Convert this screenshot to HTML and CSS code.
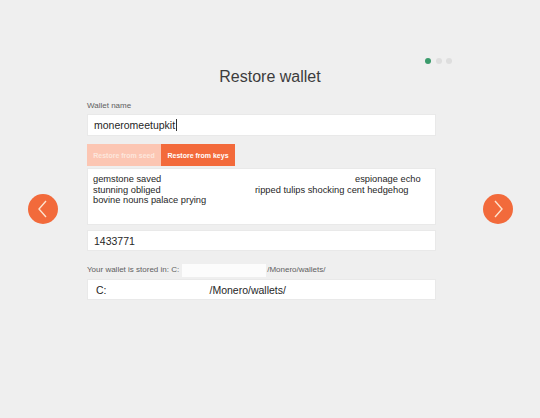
FILE: index.html
```html
<!DOCTYPE html>
<html lang="en">
<head>
    <meta charset="UTF-8">
    <meta name="viewport" content="width=device-width, initial-scale=1.0">
    <title>Restore wallet</title>
    <link rel="stylesheet" href="styles.css">
</head>
<body>
    <div class="page">
        <!-- Step indicator -->
        <div class="pager">
            <span class="dot on"></span>
            <span class="dot"></span>
            <span class="dot"></span>
        </div>

        <h1 class="title">Restore wallet</h1>

        <div class="stage">
            <button class="nav prev" type="button">
                <svg viewBox="0 0 30 30"><polyline points="18,7 11,15 18,23" /></svg>
            </button>

            <form class="form">
                <div class="label">Wallet name</div>
                <div class="field">moneromeetupkit<span class="caret"></span></div>

                <div class="tabs">
                    <span class="tab seed">Restore from seed</span>
                    <span class="tab keys">Restore from keys</span>
                </div>

                <div class="seed-box">
                    <div class="seed-line"><span class="w1">gemstone saved</span>espionage echo</div>
                    <div class="seed-line"><span class="w2">stunning obliged</span>ripped tulips shocking cent hedgehog</div>
                    <div class="seed-line">bovine nouns palace prying</div>
                </div>

                <div class="field short">1433771</div>

                <div class="label store">Your wallet is stored in: C:<span class="mask"></span>/Monero/wallets/</div>
                <div class="field short path">C:<span class="blank"></span>/Monero/wallets/</div>
            </form>

            <button class="nav next" type="button">
                <svg viewBox="0 0 30 30"><polyline points="12,7 19,15 12,23" /></svg>
            </button>
        </div>
    </div>
</body>
</html>
```

FILE: styles.css
```css
body {
    margin: 0;
    padding: 0;
    background-color: #efefef;
    font-family: "Liberation Sans", Arial, sans-serif;
    color: #222;
}

.page {
    width: 540px;
    height: 418px;
    box-sizing: border-box;
    padding-top: 58px;
}

/* Step dots, top right */
.pager {
    display: flex;
    justify-content: flex-end;
    gap: 4.5px;
    padding-right: 88px;
    height: 6px;
}

.dot {
    width: 6px;
    height: 6px;
    border-radius: 50%;
    background: #dedede;
}

.dot.on {
    background: #3b9b6c;
}

.title {
    margin: 3px 0 0;
    text-align: center;
    font-size: 16px;
    line-height: 20px;
    font-weight: normal;
    color: #3c3c3c;
}

.stage {
    display: flex;
    align-items: flex-start;
    margin-top: 14px;
    padding-left: 28px;
}

.nav {
    width: 30px;
    height: 30px;
    margin-top: 93px;
    padding: 0;
    border: none;
    border-radius: 50%;
    background: #f26a3b;
    cursor: pointer;
}

.nav svg {
    display: block;
    width: 30px;
    height: 30px;
    fill: none;
    stroke: #fde3cf;
    stroke-width: 1.4;
}

.prev {
    margin-right: 29px;
}

.next {
    margin-left: 47px;
}

.form {
    width: 349px;
    display: flex;
    flex-direction: column;
}

.label {
    font-size: 8px;
    line-height: 10px;
    color: #606060;
    margin-bottom: 3px;
}

.field {
    height: 22px;
    box-sizing: border-box;
    display: flex;
    align-items: center;
    padding: 0 6px;
    background: #fff;
    border: 1px solid #e9e9e9;
    font-size: 10.5px;
    color: #262626;
}

.field.short {
    height: 21px;
    margin-top: 5px;
}

.caret {
    display: inline-block;
    width: 1px;
    height: 12px;
    margin-left: 1px;
    background: #333;
}

.tabs {
    display: flex;
    margin-top: 8px;
}

.tab {
    width: 74px;
    height: 22px;
    display: flex;
    align-items: center;
    justify-content: center;
    font-size: 7px;
    font-weight: bold;
    color: #fff;
}

.tab.seed {
    background: #fcc6b3;
    color: #fde6dd;
}

.tab.keys {
    background: #f36a3b;
}

.seed-box {
    height: 57px;
    box-sizing: border-box;
    margin-top: 2px;
    padding: 5px 5px;
    background: #fff;
    border: 1px solid #e9e9e9;
    font-size: 9.3px;
    line-height: 10.7px;
    color: #262626;
}

.seed-line {
    white-space: nowrap;
}

.w1,
.w2 {
    display: inline-block;
}

.w1 {
    width: 262px;
}

.w2 {
    width: 162px;
}

.label.store {
    display: flex;
    align-items: center;
    height: 10px;
    margin: 14px 0 4px;
    white-space: nowrap;
}

.mask {
    flex: none;
    width: 84px;
    height: 13px;
    margin: 0 1px 0 3px;
    background: #fcfcfc;
}

.field.path {
    margin-top: 0;
    padding-left: 8px;
}

.blank {
    display: inline-block;
    width: 103px;
}
```
